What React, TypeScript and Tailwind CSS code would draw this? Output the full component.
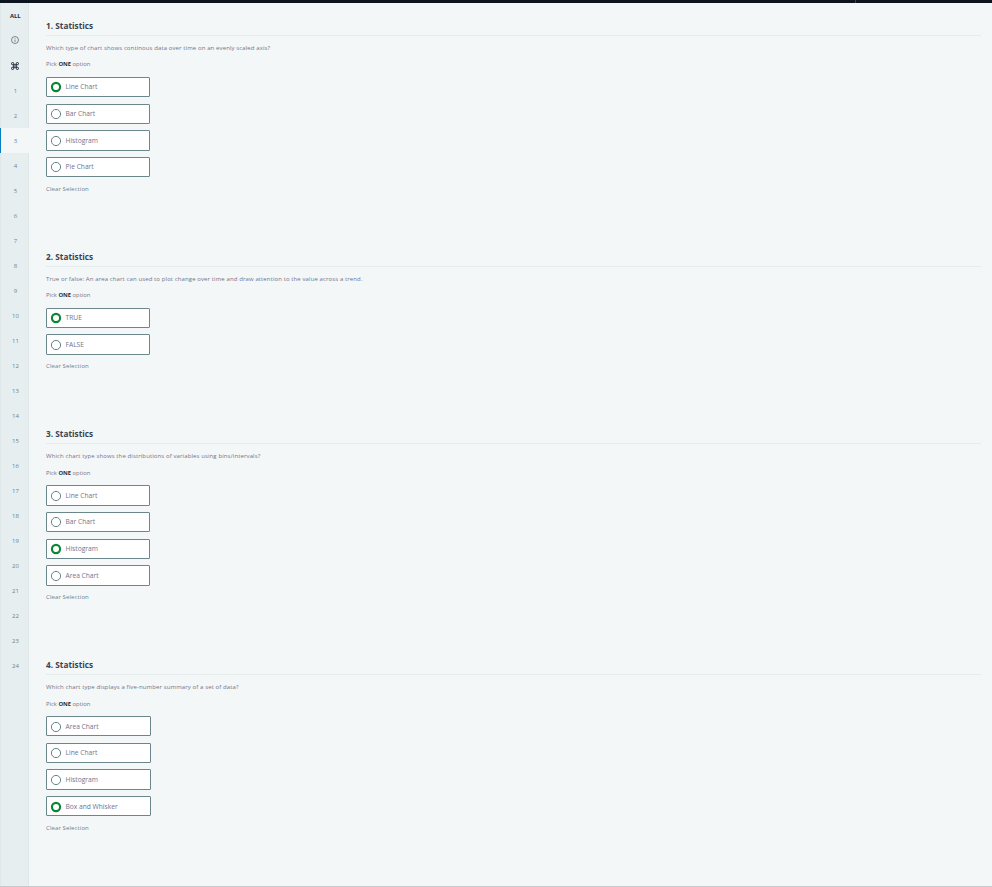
import React from "react";

type Question = {
  prompt: string;
  options: string[];
  picked: number;
  height: string;
  optionWidth: string;
};

const questions: Question[] = [
  {
    prompt: "Which type of chart shows continous data over time on an evenly scaled axis?",
    options: ["Line Chart", "Bar Chart", "Histogram", "Pie Chart"],
    picked: 0,
    height: "h-[230.8px]",
    optionWidth: "w-[104px]",
  },
  {
    prompt:
      "True or false: An area chart can used to plot change over time and draw attention to the value across a trend.",
    options: ["TRUE", "FALSE"],
    picked: 0,
    height: "h-[177.6px]",
    optionWidth: "w-[104px]",
  },
  {
    prompt: "Which chart type shows the distributions of variables using bins/intervals?",
    options: ["Line Chart", "Bar Chart", "Histogram", "Area Chart"],
    picked: 2,
    height: "h-[230.8px]",
    optionWidth: "w-[104px]",
  },
  {
    prompt: "Which chart type displays a five-number summary of a set of data?",
    options: ["Area Chart", "Line Chart", "Histogram", "Box and Whisker"],
    picked: 3,
    height: "h-[190px]",
    optionWidth: "w-[105px]",
  },
];

function Radio({ on }: { on: boolean }) {
  return (
    <svg className="h-[12px] w-[12px] shrink-0" viewBox="0 0 12 12" fill="none">
      {on ? (
        <circle cx="6" cy="6" r="4.1" stroke="#078634" strokeWidth="2.1" />
      ) : (
        <circle cx="6" cy="6" r="4.6" stroke="#698487" strokeWidth="1" />
      )}
    </svg>
  );
}

function Section({ q, n }: { q: Question; n: number }) {
  return (
    <section className={`shrink-0 ${q.height}`}>
      <h2 className="h-[17px] border-b border-[#e6ebec] text-[8.2px] leading-[14px] font-bold tracking-[0.04px] text-[#39424e]">
        {n}. Statistics
      </h2>
      <p className="mt-[7px] h-[10px] text-[6px] leading-[10px] tracking-[0.11px] whitespace-nowrap">{q.prompt}</p>
      <p className="mt-[6.4px] h-[10px] text-[5.85px] leading-[10px]">
        Pick <b className="text-[#273040]">ONE</b> option
      </p>
      <div className="mt-[7.55px] flex flex-col gap-[6.32px]">
        {q.options.map((o, i) => (
          <div
            key={o}
            className={`flex h-[20.33px] items-center gap-[3.5px] rounded-[1px] border border-[#6b878b] bg-white pt-[0.7px] pl-[3px] text-[6.67px] leading-[10px] ${q.optionWidth}`}
          >
            <Radio on={i === q.picked} />
            <span className="whitespace-nowrap">{o}</span>
          </div>
        ))}
      </div>
      <p className="mt-[6.6px] text-[6px] leading-[10px] tracking-[0.1px] text-[#6b8390]">Clear Selection</p>
    </section>
  );
}

export default function App() {
  return (
    <div className="flex h-[887px] w-[992px] flex-col overflow-hidden border-b border-[#c5cbcd] bg-[#f3f7f8] font-['Open_Sans',sans-serif] text-[#73748a]">
      <header className="flex h-[3px] shrink-0 bg-[#0e141e]">
        <span className="ml-[855px] w-px bg-[#39424e]" />
      </header>
      <div className="flex min-h-0 flex-1">
        <nav className="flex w-[29px] shrink-0 flex-col border-x border-[#e0e7e9] bg-[#e7eef0] text-[6px] text-[#6c8492]">
          <div className="flex h-[25px] shrink-0 items-center justify-center pt-[1px] pl-[1.5px] text-[5.9px] font-bold text-[#1d2738]">ALL</div>
          <div className="flex h-[25px] shrink-0 items-center justify-center pr-px pb-px pl-[2px]">
            <svg className="h-[8px] w-[8px]" viewBox="0 0 8 8" fill="none" stroke="#46515c" strokeWidth="0.65">
              <circle cx="4" cy="4" r="3.5" />
              <path d="M4 3.6v2.3M4 2.1v.7" />
            </svg>
          </div>
          <div className="flex h-[25px] shrink-0 items-center justify-center pr-px pl-[2px]">
            <svg className="h-[8px] w-[8px]" viewBox="0 0 8 8" fill="none" stroke="#1d2738" strokeWidth="1">
              <path d="M2.8 2.8H1.7A1.15 1.15 0 1 1 2.8 1.7v4.6A1.15 1.15 0 1 1 1.7 5.2h4.6A1.15 1.15 0 1 1 5.2 6.3V1.7A1.15 1.15 0 1 1 6.3 2.8Z" />
            </svg>
          </div>
          {Array.from({ length: 24 }, (_, i) => (
            <div
              key={i}
              className={
                i === 2
                  ? "-mx-px flex h-[25px] shrink-0 items-center justify-center border-l border-[#087ec0] bg-[#f3f7f8] pt-[2px] pl-[1px]"
                  : "flex h-[25px] shrink-0 items-center justify-center pt-[2px] pl-[2px]"
              }
            >
              {i + 1}
            </div>
          ))}
        </nav>
        <main className="min-w-0 flex-1 pt-[16px] pr-[11px] pl-[17px]">
          {questions.map((q, i) => (
            <Section key={i} q={q} n={i + 1} />
          ))}
        </main>
      </div>
    </div>
  );
}
